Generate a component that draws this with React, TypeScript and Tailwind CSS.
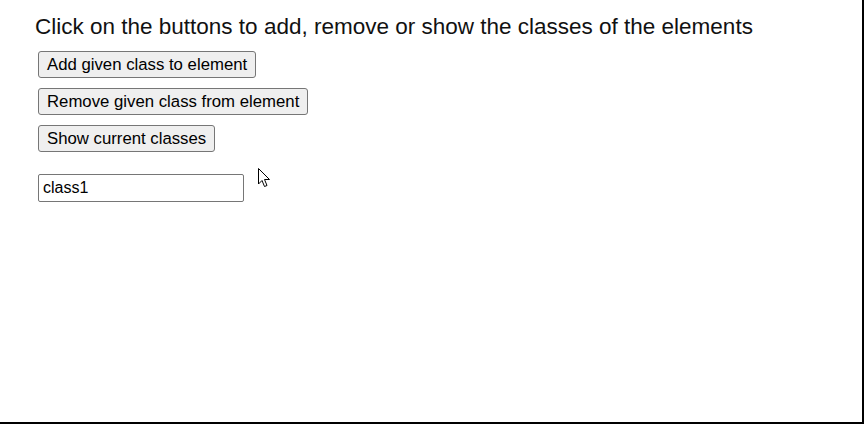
import React from "react";

export default function App() {
  const btn =
    "h-[27px] px-[8px] bg-[#efefef] border border-[#767676] rounded-[3px] text-[16.75px] leading-[20px] text-black self-start";
  return (
    <div
      className="relative w-[864px] h-[424px] bg-white border-r-2 border-b-2 border-black overflow-hidden"
      style={{ fontFamily: '"Liberation Sans", Arial, sans-serif' }}
    >
      <div className="flex flex-col pl-[38px] pt-[14px]">
        <div className="text-[22.5px] leading-[26px] text-[#111] -ml-[3px] whitespace-nowrap">
          Click on the buttons to add, remove or show the classes of the elements
        </div>
        <div className="flex flex-col gap-[10px] mt-[11px]">
          <button className={btn}>Add given class to element</button>
          <button className={btn}>Remove given class from element</button>
          <button className={btn}>Show current classes</button>
        </div>
        <input
          defaultValue="class1"
          className="mt-[22px] w-[206px] h-[28px] border border-[#767676] rounded-[2px] px-[4px] text-[16px] text-black outline-none"
        />
      </div>
      <svg
        className="absolute left-[258px] top-[168px]"
        width="14"
        height="22"
        viewBox="0 0 14 22"
      >
        <path
          d="M0.5 0.5 L0.5 16 L4 12.5 L6.5 18.5 L9 17.5 L6.5 11.5 L11.5 11.5 Z"
          fill="white"
          stroke="black"
          strokeWidth="1"
          strokeLinejoin="miter"
        />
      </svg>
    </div>
  );
}
